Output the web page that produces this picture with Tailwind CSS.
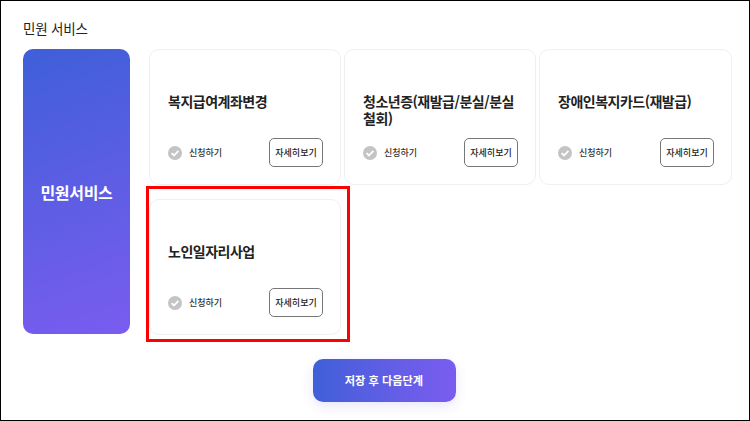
<!doctype html>
<html lang="ko">
<head>
<meta charset="utf-8">
<script src="https://cdn.jsdelivr.net/npm/@tailwindcss/browser@4"></script>
</head>
<body class="bg-white">
<div class="relative h-[421px] w-[750px] overflow-hidden bg-white font-['Noto_Sans_CJK_KR','Noto_Sans',sans-serif] text-[#222]">
  <div class="flex h-[421px] w-[750px] flex-col border border-black pl-[22px] pt-[17px]">
    <h2 class="h-[20px] text-[13.5px] leading-[20px] font-normal tracking-[-0.2px]">민원 서비스</h2>
    <div class="mt-[11px] flex">
      <div class="flex h-[285px] w-[107px] items-center justify-center rounded-[10px] bg-linear-[160deg] from-[#3f5fd8] to-[#7a5cf0] text-[16px] font-bold text-white tracking-[-0.3px]">민원서비스</div>
      <div class="ml-[19px] grid w-[584px] grid-cols-[192px_192px_193px] gap-x-[3px] gap-y-[14px]">

        <div class="flex h-[136px] flex-col rounded-[10px] border border-[#efeff1] bg-white pr-[17px] pl-[18px]">
          <div class="h-[88px] pt-[43px] text-[14px] leading-[17px] font-bold tracking-[-0.5px]">복지급여계좌변경</div>
          <div class="flex items-center justify-between">
            <div class="flex items-center gap-[7px]">
              <svg width="14" height="14" viewBox="0 0 14 14"><circle cx="7" cy="7" r="7" fill="#c4c4c4"/><path d="M3.6 7.1 6 9.5 10.4 4.9" fill="none" stroke="#fff" stroke-width="1.8"/></svg>
              <span class="text-[9px] font-medium text-[#333]">신청하기</span>
            </div>
            <button class="h-[29px] w-[54px] rounded-[5px] border border-[#777] bg-white text-[9px] font-medium text-[#222]">자세히보기</button>
          </div>
        </div>

        <div class="flex h-[136px] flex-col rounded-[10px] border border-[#efeff1] bg-white pr-[17px] pl-[18px]">
          <div class="h-[88px] pt-[43px] text-[14px] leading-[17px] font-bold tracking-[-0.5px]">청소년증(재발급/분실/분실철회)</div>
          <div class="flex items-center justify-between">
            <div class="flex items-center gap-[7px]">
              <svg width="14" height="14" viewBox="0 0 14 14"><circle cx="7" cy="7" r="7" fill="#c4c4c4"/><path d="M3.6 7.1 6 9.5 10.4 4.9" fill="none" stroke="#fff" stroke-width="1.8"/></svg>
              <span class="text-[9px] font-medium text-[#333]">신청하기</span>
            </div>
            <button class="h-[29px] w-[54px] rounded-[5px] border border-[#777] bg-white text-[9px] font-medium text-[#222]">자세히보기</button>
          </div>
        </div>

        <div class="flex h-[136px] flex-col rounded-[10px] border border-[#efeff1] bg-white pr-[17px] pl-[18px]">
          <div class="h-[88px] pt-[43px] text-[14px] leading-[17px] font-bold tracking-[-0.5px]">장애인복지카드(재발급)</div>
          <div class="flex items-center justify-between">
            <div class="flex items-center gap-[7px]">
              <svg width="14" height="14" viewBox="0 0 14 14"><circle cx="7" cy="7" r="7" fill="#c4c4c4"/><path d="M3.6 7.1 6 9.5 10.4 4.9" fill="none" stroke="#fff" stroke-width="1.8"/></svg>
              <span class="text-[9px] font-medium text-[#333]">신청하기</span>
            </div>
            <button class="h-[29px] w-[54px] rounded-[5px] border border-[#777] bg-white text-[9px] font-medium text-[#222]">자세히보기</button>
          </div>
        </div>

        <div class="flex h-[136px] flex-col rounded-[10px] border border-[#efeff1] bg-white pr-[17px] pl-[18px]">
          <div class="h-[88px] pt-[43px] text-[14px] leading-[17px] font-bold tracking-[-0.5px]">노인일자리사업</div>
          <div class="flex items-center justify-between">
            <div class="flex items-center gap-[7px]">
              <svg width="14" height="14" viewBox="0 0 14 14"><circle cx="7" cy="7" r="7" fill="#c4c4c4"/><path d="M3.6 7.1 6 9.5 10.4 4.9" fill="none" stroke="#fff" stroke-width="1.8"/></svg>
              <span class="text-[9px] font-medium text-[#333]">신청하기</span>
            </div>
            <button class="h-[29px] w-[54px] rounded-[5px] border border-[#777] bg-white text-[9px] font-medium text-[#222]">자세히보기</button>
          </div>
        </div>

      </div>
    </div>
    <div class="mt-[24px] flex justify-center pr-[22px]">
      <button class="ml-[18px] h-[43px] w-[143px] rounded-[10px] bg-linear-to-r from-[#3f5fd8] to-[#7a5cf0] text-[11.2px] font-bold text-white shadow-[0_4px_12px_rgba(100,90,230,0.15)]">저장 후 다음단계</button>
    </div>
  </div>
  <div class="pointer-events-none absolute top-[186px] left-[146px] h-[156px] w-[204px] border-[3px] border-[#f00]"></div>
</div>
</body>
</html>
